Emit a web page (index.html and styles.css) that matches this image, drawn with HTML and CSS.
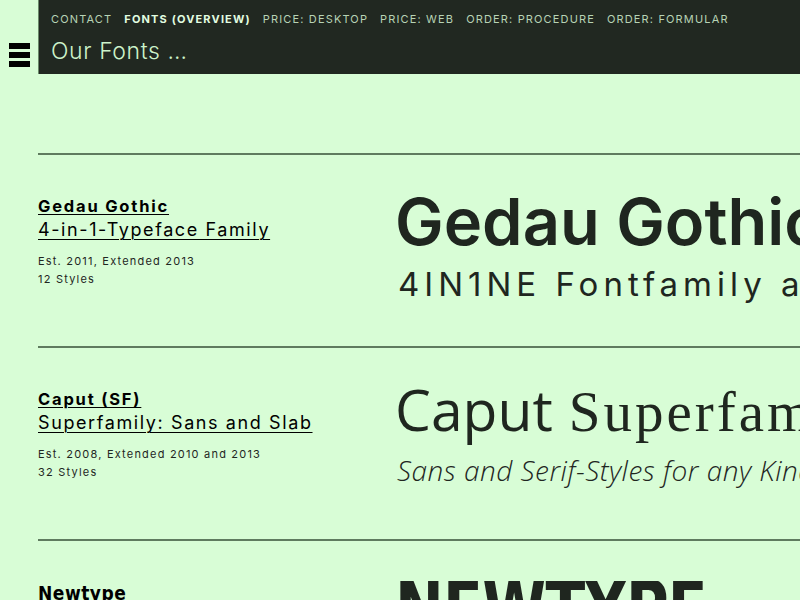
FILE: index.html
```html
<!DOCTYPE html>
<html>
<head>
<meta charset="utf-8">
<link rel="stylesheet" href="styles.css">
</head>
<body>
<div class="page">
  <div class="side">
    <div class="burger"><span></span><span></span><span></span></div>
  </div>
  <div class="content">
    <header class="top">
      <nav class="nav">
        <a>Contact</a>
        <a class="active">Fonts (Overview)</a>
        <a>Price: Desktop</a>
        <a>Price: Web</a>
        <a>Order: Procedure</a>
        <a>Order: Formular</a>
      </nav>
      <h1 class="title">Our Fonts …</h1>
    </header>
    <main class="list">
      <section class="font">
        <div class="info">
          <h2 class="name">Gedau Gothic</h2>
          <p class="sub">4-in-1-Typeface Family</p>
          <p class="meta">Est. 2011, Extended 2013<br>12 Styles</p>
        </div>
        <div class="specimen">
          <div class="gg-big">Gedau Gothic</div>
          <div class="gg-small">4IN1NE Fontfamily and more</div>
        </div>
      </section>
      <section class="font">
        <div class="info">
          <h2 class="name">Caput (SF)</h2>
          <p class="sub">Superfamily: Sans and Slab</p>
          <p class="meta">Est. 2008, Extended 2010 and 2013<br>32 Styles</p>
        </div>
        <div class="specimen">
          <div class="cp-big"><span class="cp-sans">Caput</span> <span class="cp-serif">Superfamily</span></div>
          <div class="cp-small">Sans and Serif-Styles for any Kind of Text</div>
        </div>
      </section>
      <section class="font">
        <div class="info">
          <h2 class="name nt-name">Newtype</h2>
        </div>
        <div class="specimen">
          <div class="nt-big">NEWTYPE</div>
        </div>
      </section>
    </main>
  </div>
</div>
</body>
</html>
```
FILE: styles.css
```css
html, body {
  margin: 0;
  padding: 0;
  background: #d8fdd6;
  overflow: hidden;
}
body {
  font-family: "Inter", "DejaVu Sans", sans-serif;
  color: #1f261f;
}
.page {
  display: flex;
  width: 800px;
  height: 600px;
  overflow: hidden;
}
.side {
  width: 38px;
  flex: none;
}
.burger {
  display: flex;
  flex-direction: column;
  gap: 3px;
  margin: 43px 0 0 9px;
  width: 21px;
}
.burger span {
  display: block;
  height: 6px;
  background: #000;
}
.content {
  flex: 1;
  min-width: 0;
}
.top {
  background: #212821;
  height: 74px;
  border-left: 1px solid #6a8a6a;
  box-sizing: border-box;
  padding: 12px 0 0 12px;
}
.nav {
  display: flex;
  gap: 12px;
  white-space: nowrap;
}
.nav a {
  font-size: 11px;
  letter-spacing: 1.15px;
  text-transform: uppercase;
  color: #b7d3b5;
  line-height: 14px;
}
.nav a.active {
  font-weight: 700;
  color: #e2fde0;
}
.title {
  margin: 11px 0 0 0;
  font-size: 23px;
  font-weight: 300;
  letter-spacing: 0.6px;
  color: #cdf3ca;
  line-height: 28px;
}
.list {
  margin-top: 79px;
}
.font {
  display: grid;
  grid-template-columns: 357px 1fr;
  border-top: 2px solid #5f7b5f;
  height: 193px;
  padding-top: 40px;
  box-sizing: border-box;
}
.info {
  min-width: 0;
}
.name {
  margin: 0;
  font-size: 16.5px;
  font-weight: 700;
  line-height: 22px;
  text-decoration: underline;
  text-underline-offset: 2px;
  color: #000;
  letter-spacing: 1.8px;
}
.sub {
  margin: 2px 0 0 0;
  font-size: 18px;
  line-height: 22px;
  text-decoration: underline;
  text-underline-offset: 3px;
  text-decoration-thickness: 1px;
  color: #000;
  letter-spacing: 1.6px;
}
.meta {
  margin: 11px 0 0 0;
  font-size: 11px;
  line-height: 18px;
  letter-spacing: 1.2px;
  color: #1f261f;
}
.specimen {
  white-space: nowrap;
  overflow: hidden;
  min-width: 0;
}
.gg-big {
  font-size: 65px;
  font-weight: 600;
  line-height: 60px;
  margin-top: -3px;
  letter-spacing: 0;
}
.gg-small {
  font-size: 33px;
  font-weight: 400;
  line-height: 40px;
  margin-top: 12px;
  letter-spacing: 5px;
  margin-left: 3px;
}
.cp-big {
  font-size: 57px;
  line-height: 64px;
  margin-top: -11px;
}
.cp-sans {
  font-family: "Open Sans", sans-serif;
  font-weight: 400;
}
.cp-serif {
  font-family: "Liberation Serif", serif;
  font-weight: 400;
  letter-spacing: 3px;
}
.cp-small {
  font-family: "Open Sans", sans-serif;
  font-style: italic;
  font-weight: 300;
  font-size: 28px;
  line-height: 36px;
  margin-top: 8px;
  margin-left: 2px;
  letter-spacing: 0.5px;
}
.nt-name {
  font-family: "DejaVu Sans Condensed", "DejaVu Sans", sans-serif;
  font-stretch: condensed;
  font-size: 19px;
  letter-spacing: 0.5px;
  margin-top: 1px;
}
.nt-big {
  display: inline-block;
  font-family: "DejaVu Sans Condensed", "DejaVu Sans", sans-serif;
  font-stretch: condensed;
  font-weight: 900;
  font-size: 80px;
  line-height: 70px;
  letter-spacing: -1px;
  margin-top: -6px;
  transform: scaleX(0.81);
  transform-origin: left top;
}
```
